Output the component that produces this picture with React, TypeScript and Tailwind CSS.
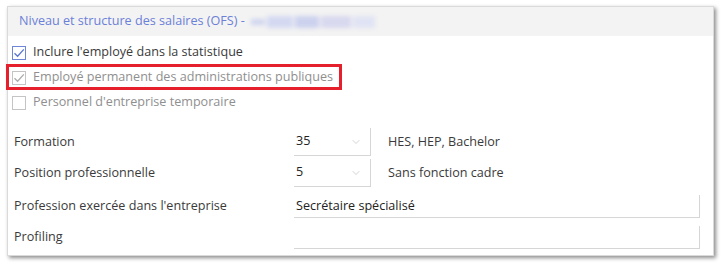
import { ChevronDown } from "lucide-react";

const font = { fontFamily: '"Open Sans", "Noto Sans", sans-serif' };

function Checkbox({ state }: { state: "checked" | "disabled" | "empty" }) {
  const border =
    state === "checked" ? "border-[#6d86d8]" : "border-[#c4c4c4]";
  const stroke = state === "checked" ? "#5876d4" : "#ababab";
  return (
    <span
      className={`w-[14px] h-[14px] border ${border} bg-white flex items-center justify-center shrink-0`}
    >
      {state !== "empty" && (
        <svg width="12" height="12" viewBox="0 0 12 12">
          <path d="M1.5 6.2 L4.6 9.2 L10.8 2.4" fill="none" stroke={stroke} strokeWidth="1.3" />
        </svg>
      )}
    </span>
  );
}

function SelectField({ value, text }: { value: string; text: string }) {
  return (
    <div className="flex items-center">
      <div className="w-[77px] h-[28px] border-b border-r border-[#d6d6d6] flex items-center justify-between pl-[2px] pr-[8px]">
        <span className="text-[#222]">{value}</span>
        <ChevronDown size={12} strokeWidth={1.2} className="text-[#b5b5b5]" />
      </div>
      <span className="ml-[17px] text-[#3a3a3a]">{text}</span>
    </div>
  );
}

function FormRow({ label, children, tall, className }: { label: string; children: React.ReactNode; tall?: boolean; className?: string }) {
  return (
    <div className={`flex items-center ${tall ? "h-[28px]" : "h-[23px]"} ${className ?? ""}`}>
      <div className="w-[280px] text-[#3a3a3a]">{label}</div>
      {children}
    </div>
  );
}

export default function App() {
  return (
    <div className="w-[722px] h-[264px] bg-white pt-[6px] pl-[7px] text-[12.6px]" style={font}>
      <div className="relative w-[707px] h-[250px] bg-white border border-[#dadada] shadow-[2px_2px_4px_rgba(0,0,0,0.45)]">
        {/* HEADER */}
        <div className="h-[29px] bg-[#f3f3f3] flex items-center pl-[11px] text-[#6b80d8]">
          <span>Niveau et structure des salaires (OFS) -</span>
          <span className="ml-[6px] flex items-center gap-[2px] blur-[2px]">
            <span className="w-[14px] h-[6px] bg-[#cfd5ef]" />
            <span className="w-[26px] h-[12px] bg-[#d4d9f1]" />
            <span className="w-[24px] h-[12px] bg-[#ccd1ee]" />
            <span className="w-[30px] h-[12px] bg-[#d8d8ef]" />
            <span className="w-[22px] h-[12px] bg-[#e0e3f3]" />
          </span>
        </div>

        {/* CHECKBOXES */}
        <div className="pt-[4px] pl-[4px]">
          <div className="h-[25px] flex items-center gap-[7px] text-[#3a3a3a]">
            <Checkbox state="checked" />
            <span>Inclure l'employé dans la statistique</span>
          </div>
          <div className="relative h-[25px] flex items-center gap-[7px] text-[#8f8f8f]">
            <Checkbox state="disabled" />
            <span>Employé permanent des administrations publiques</span>
            <div className="absolute left-[-6px] top-[-1px] w-[336px] h-[26px] border-[3px] border-[#e5202c]" />
          </div>
          <div className="h-[25px] flex items-center gap-[7px] text-[#8f8f8f]">
            <Checkbox state="empty" />
            <span>Personnel d'entreprise temporaire</span>
          </div>
        </div>

        {/* FORM */}
        <div className="pl-[6px] pr-[13px] mt-[13px]">
          <FormRow label="Formation" tall>
            <SelectField value="35" text="HES, HEP, Bachelor" />
          </FormRow>
          <FormRow label="Position professionnelle" tall className="mt-[3px]">
            <SelectField value="5" text="Sans fonction cadre" />
          </FormRow>
          <FormRow label="Profession exercée dans l'entreprise" className="mt-[8px]">
            <div className="flex-1 h-[23px] border-b border-r border-[#d6d6d6] pl-[2px] flex items-center text-[#222]">
              Secrétaire spécialisé
            </div>
          </FormRow>
          <FormRow label="Profiling" className="mt-[8px]">
            <div className="flex-1 h-[23px] border-b border-r border-[#d6d6d6]" />
          </FormRow>
        </div>
      </div>
    </div>
  );
}
